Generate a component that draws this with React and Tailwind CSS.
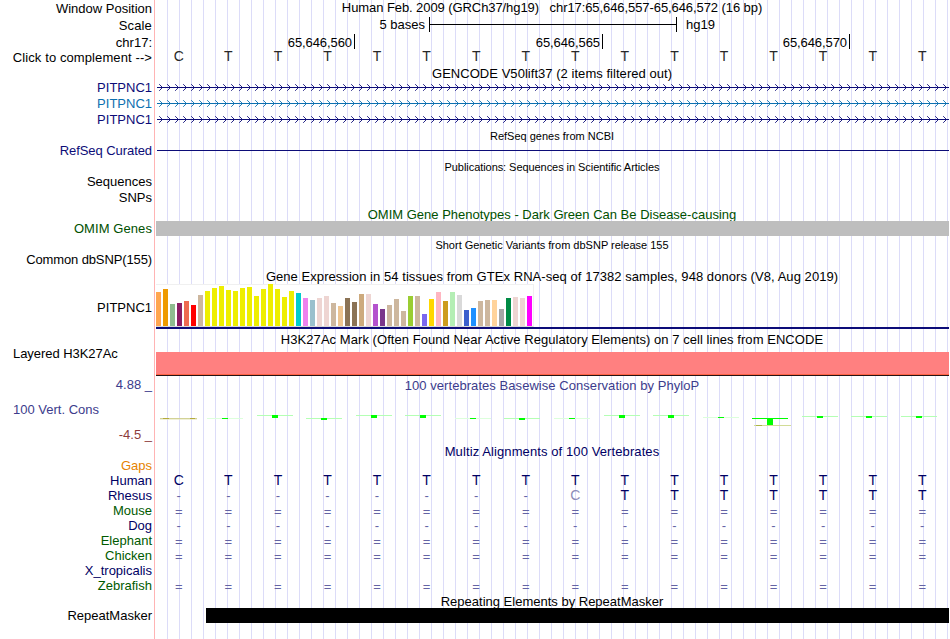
import clsx from "clsx";

const labels = [
  { text: "Window Position", className: "mt-px" },
  { text: "Scale", className: "mt-[2px] tracking-[0.15px]" },
  { text: "chr17:", className: "mt-[2px]" },
  { text: "Click to complement -->", className: "tracking-[0.1px]" },
  { text: "PITPNC1", className: "mt-[15px] text-[#0c0c78]" },
  { text: "PITPNC1", className: "mt-px text-[#0c70b0]" },
  { text: "PITPNC1", className: "mt-px text-[#0c0c78]" },
  { text: "RefSeq Curated", className: "mt-4 tracking-[-0.07px] text-[#0c0c78]" },
  { text: "Sequences", className: "mt-4" },
  { text: "SNPs", className: "mt-px" },
  { text: "OMIM Genes", className: "mt-4 tracking-[0.08px] text-[#005000]" },
  { text: "Common dbSNP(155)", className: "mt-4 tracking-[-0.12px]" },
  { text: "PITPNC1", className: "mt-[33px]" },
  { text: "Layered H3K27Ac", className: "mt-[31px] self-start pl-[13px] tracking-[-0.05px]" },
  { text: "4.88 _", className: "mt-4 text-[#3c3c8c]" },
  { text: "100 Vert. Cons", className: "mt-[10px] self-start pl-[13px] text-[#3c3c8c]" },
  { text: "-4.5 _", className: "mt-[10px] text-[#8c3c3c]" },
  { text: "Gaps", className: "mt-4 text-[#e68200]" },
  { text: "Human", className: "text-[#000064]" },
  { text: "Rhesus", className: "text-[#000064]" },
  { text: "Mouse", className: "text-[#005a00]" },
  { text: "Dog", className: "text-[#000064]" },
  { text: "Elephant", className: "text-[#005a00]" },
  { text: "Chicken", className: "text-[#005a00]" },
  { text: "X_tropicalis", className: "text-[#000064]" },
  { text: "Zebrafish", className: "text-[#005a00]" },
  { text: "RepeatMasker", className: "mt-[15px]" },
];

const positions = [
  { text: "65,646,560", className: "w-[199px]" },
  { text: "65,646,565", className: "w-[248px]" },
  { text: "65,646,570", className: "w-[247px]" },
];

const HUMAN = "CTTTTTTTTTTTTTTT";

const alignments = [
  HUMAN,
  "--------cTTTTTTT",
  "================",
  "----------------",
  "================",
  "================",
  "                ",
  "================",
];

// one [color, height] pair per GTEx tissue
const tissues = [
  ["#ffa54f", 34], ["#ee9a00", 37], ["#8fbc8f", 22], ["#8b1c62", 23], ["#ee6a50", 25],
  ["#ff0000", 21], ["#cdb79e", 31], ["#eeee00", 35], ["#eeee00", 38], ["#eeee00", 40],
  ["#eeee00", 36], ["#eeee00", 35], ["#eeee00", 38], ["#eeee00", 39], ["#eeee00", 30],
  ["#eeee00", 37], ["#eeee00", 42], ["#eeee00", 37], ["#eeee00", 29], ["#eeee00", 35],
  ["#00cdcd", 33], ["#ee82ee", 28], ["#9ac0cd", 26], ["#eed5d2", 28], ["#eed5d2", 30],
  ["#cdb79e", 23], ["#eec591", 20], ["#8b7355", 28], ["#8b7355", 24], ["#cdaa7d", 32],
  ["#eed5d2", 32], ["#b452cd", 22], ["#7a378b", 17], ["#cdb79e", 21], ["#cdb79e", 27],
  ["#cdb79e", 15], ["#9acd32", 30], ["#cdb79e", 30], ["#7a67ee", 12], ["#ffd700", 27],
  ["#ffb6c1", 34], ["#cd9b1d", 25], ["#b4eeb4", 34], ["#d9d9d9", 31], ["#3a5fcd", 16],
  ["#1e90ff", 18], ["#cdb79e", 25], ["#cdb79e", 26], ["#ffd39b", 26], ["#a6a6a6", 17],
  ["#008b45", 28], ["#eed5d2", 29], ["#eed5d2", 28], ["#ff00ff", 30],
];

// x, y and height of each PhyloP block, relative to the track
const phylop = [
  [66, 3, 1], [116, 0, 3], [165, 3, 2], [215, 0, 3], [264, 0, 3],
  [314, 3, 1], [363, 3, 2], [413, 3, 1], [463, 0, 3], [512, 0, 3],
  [562, 2, 1], [611, 3, 7], [661, 1, 2], [710, 1, 2], [760, 1, 2],
];

function Title({ children, className }) {
  return (
    <div className={clsx("h-[15px] shrink-0 pr-px text-center whitespace-pre", className)}>{children}</div>
  );
}

function GeneLine({ color, className }) {
  const arrows = Array.from({ length: 99 }, (_, i) => `M${3.2 + i * 8} 1.2l3.3 3.3l-3.3 3.3`).join("");
  return (
    <svg width="793" height="9" className={clsx("block shrink-0", className)} fill="none" stroke={color}>
      <path d="M1 4.5H793" />
      <path d={arrows} strokeWidth="0.9" />
    </svg>
  );
}

function BaseRow({ bases, className }) {
  return (
    <div className={clsx("grid h-[15px] w-[793px] shrink-0 grid-cols-16 text-center", className)}>
      {bases.split("").map((base, i) => (
        <span
          key={i}
          className={clsx(
            "relative -left-[2px]",
            base === "c" && "text-[#8c8cb8]",
            base === "=" && "top-px",
            base === "-" || base === "=" ? "text-[#6464a5]" : "text-[14px]"
          )}
        >
          {base.toUpperCase()}
        </span>
      ))}
    </div>
  );
}

function ExpressionChart() {
  return (
    <div className="flex h-[43px] w-[378px] shrink-0 items-end gap-[2px] border-t border-r border-b border-t-[#f0f0f0] border-r-[#f0f0f0] border-b-[#d8d8d8] bg-white">
      {tissues.map(([color, height], i) => (
        <div key={i} className="w-[5px] shrink-0" style={{ height, backgroundColor: color }} />
      ))}
    </div>
  );
}

function Conservation() {
  return (
    <svg width="793" height="11" className="mt-[22px] block shrink-0" shapeRendering="crispEdges">
      <rect x="4" y="3" width="37" height="1" fill="#d2d296" />
      <rect x="7" y="3" width="6" height="1" fill="#b4aa3c" />
      <rect x="34" y="3" width="5" height="1" fill="#b4aa3c" />
      <rect x="4" y="4" width="37" height="1" fill="#e6e6be" opacity="0.6" />
      {phylop.map(([x, y, h]) => (
        <g key={x}>
          <rect x={x - 15} y={y} width="36" height="1" fill={h === 7 ? "#00ff00" : h === 1 ? "#dcffdc" : "#b4ffb4"} />
          <rect x={x} y={y} width="6" height={h} fill="#00ff00" />
        </g>
      ))}
      <rect x="598" y="10" width="37" height="1" fill="#d2dc96" />
      <rect x="600" y="10" width="6" height="1" fill="#aab446" />
    </svg>
  );
}

export default function App() {
  return (
    <div className="flex h-[639px] w-[950px] overflow-hidden bg-white font-['Liberation_Sans',Arial,sans-serif] text-[13px] leading-[15px] text-black">
      <div className="flex w-[154px] shrink-0 flex-col items-end pr-[2px]">
        {labels.map(({ text, className }, i) => (
          <div key={i} className={clsx("h-[15px] shrink-0 whitespace-nowrap", className)}>
            {text}
          </div>
        ))}
      </div>
      <div className="mr-px w-px shrink-0 bg-[#ffb4b4]" />

      <div className="flex w-[793px] shrink-0 flex-col bg-[repeating-linear-gradient(90deg,transparent_0px,transparent_11px,#dcdcf8_11px,#dcdcf8_12px)]">
        <Title className="tracking-[-0.08px]">{"Human Feb. 2009 (GRCh37/hg19)   chr17:65,646,557-65,646,572 (16 bp)"}</Title>
        <div className="mt-[2px] flex h-[15px] shrink-0">
          <span className="w-[269px] text-right">5 bases</span>
          <div className="ml-1 flex w-[248px] items-center border-x border-black">
            <div className="h-px w-full bg-black" />
          </div>
          <span className="ml-[9px]">hg19</span>
        </div>
        <div className="mt-[2px] flex h-[15px] shrink-0">
          {positions.map(({ text, className }) => (
            <div key={text} className={clsx("border-r border-black pr-[2px] text-right leading-[17px] tracking-[-0.08px]", className)}>
              {text}
            </div>
          ))}
        </div>
        <BaseRow bases={HUMAN} className="text-[#282828]" />

        <Title className="mt-[2px] tracking-[0.04px]">GENCODE V50lift37 (2 items filtered out)</Title>
        <GeneLine color="#0c0c78" className="mt-[2px]" />
        <GeneLine color="#0c70b0" className="mt-[7px]" />
        <GeneLine color="#0c0c78" className="mt-[7px]" />

        <Title className="mt-[5px] text-[11px]">RefSeq genes from NCBI</Title>
        <div className="mt-[6px] ml-px h-px shrink-0 bg-[#0c0c78]" />
        <Title className="mt-[9px] text-[11px] tracking-[-0.06px]">Publications: Sequences in Scientific Articles</Title>

        <Title className="mt-8 -mb-px text-[#005000]">OMIM Gene Phenotypes - Dark Green Can Be Disease-causing</Title>
        <div className="z-10 h-[15px] shrink-0 bg-[#bebebe]" />
        <Title className="mt-[2px] text-[11px]">Short Genetic Variants from dbSNP release 155</Title>

        <Title className="mt-4 tracking-[0.055px]">Gene Expression in 54 tissues from GTEx RNA-seq of 17382 samples, 948 donors (V8, Aug 2019)</Title>
        <ExpressionChart />
        <div className="h-[2px] shrink-0 bg-[#0c0c78]" />

        <Title className="mt-[3px] tracking-[0.055px]">H3K27Ac Mark (Often Found Near Active Regulatory Elements) on 7 cell lines from ENCODE</Title>
        <div className="mt-[5px] h-6 shrink-0 border-b border-[#281414] bg-[#ff8080]">
          <div className="h-[22px]" />
          <div className="h-px bg-[#ff6446]" />
        </div>

        <Title className="mt-[2px] tracking-[0.055px] text-[#3c3c8c]">100 vertebrates Basewise Conservation by PhyloP</Title>
        <Conservation />

        <Title className="mt-[18px] mb-[14px] tracking-[0.1px] text-[#000064]">Multiz Alignments of 100 Vertebrates</Title>
        {alignments.map((bases, i) => (
          <BaseRow key={i} bases={bases} className="text-[#000064]" />
        ))}

        <Title className="mt-px -mb-px">Repeating Elements by RepeatMasker</Title>
        <div className="z-10 ml-[50px] h-[15px] shrink-0 bg-black" />
      </div>
    </div>
  );
}
